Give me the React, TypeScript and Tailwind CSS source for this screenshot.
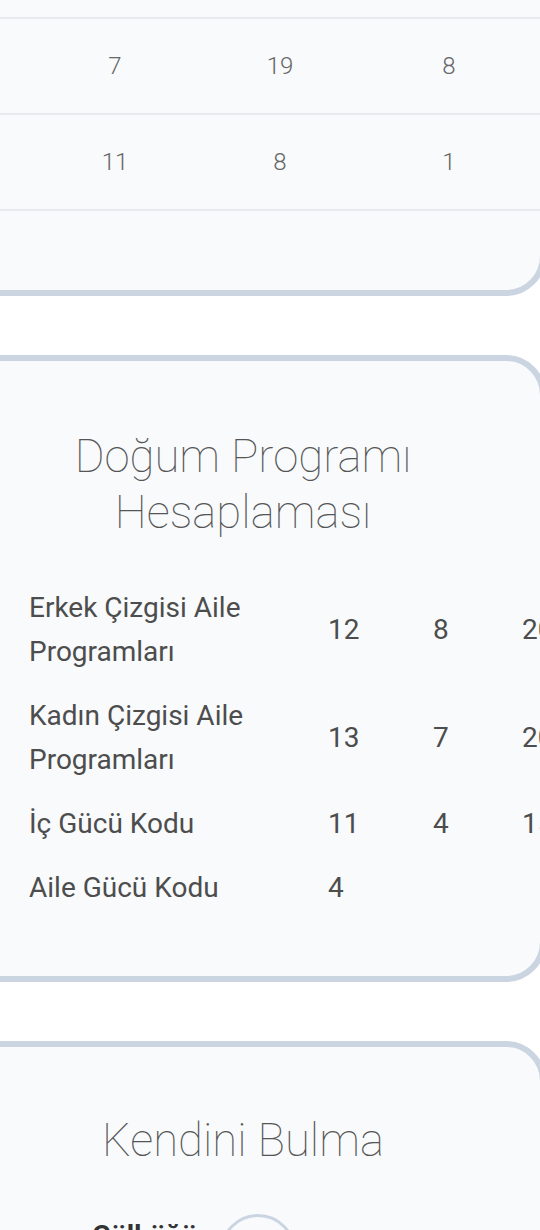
const topRows = [
  ["7", "19", "8"],
  ["11", "8", "1"],
];

const birthRows: { label: string; values: string[] }[] = [
  { label: "Erkek Çizgisi Aile Programları", values: ["12", "8", "20"] },
  { label: "Kadın Çizgisi Aile Programları", values: ["13", "7", "20"] },
  { label: "İç Gücü Kodu", values: ["11", "4", "15"] },
  { label: "Aile Gücü Kodu", values: ["4"] },
];

function Card({ className = "", children }: { className?: string; children: React.ReactNode }) {
  return (
    <div className={"rounded-[40px] border-[6px] border-[#cbd5e1] bg-[#f8fafc] " + className}>
      {children}
    </div>
  );
}

function Title({ children }: { children: React.ReactNode }) {
  return (
    <h2 className="px-[60px] text-center text-[45.5px] leading-[56px] font-thin text-[#555]">
      {children}
    </h2>
  );
}

export default function App() {
  return (
    <div className="h-[1230px] w-[540px] overflow-hidden bg-white font-['Roboto',sans-serif]">
      <div className="-ml-[60px] -mt-[78px] flex w-[606px] flex-col gap-[59px]">
        {/* previous table, scrolled up */}
        <Card className="pb-[79px]">
          <div className="h-[91px] border-b-2 border-[#e8eaed]" />
          {topRows.map((row, i) => (
            <div
              key={i}
              className="grid h-[96px] grid-cols-[88px_162px_168px_170px] items-center border-b-2 border-[#e8eaed] text-[24px] font-light text-[#666]"
            >
              <div />
              {row.map((v, j) => (
                <div key={j} className="text-center">
                  {v}
                </div>
              ))}
            </div>
          ))}
        </Card>

        <Card className="pt-[68px] pb-[56px]">
          <Title>Doğum Programı Hesaplaması</Title>
          <div className="mt-[35px] pl-[83px] text-[28px] leading-[44px] text-[#4d4d4d]">
            {birthRows.map((r) => (
              <div key={r.label} className="grid grid-cols-[299px_105px_89px_1fr] items-center py-[10px]">
                <div className="pr-[20px]">{r.label}</div>
                {r.values.map((v, j) => (
                  <div key={j} className="whitespace-nowrap">
                    {v}
                  </div>
                ))}
              </div>
            ))}
          </div>
        </Card>

        <Card className="pt-[66px] pb-[60px]">
          <Title>Kendini Bulma</Title>
          <div className="mt-[45px] flex items-start pl-[146px]">
            <div className="w-[128px] whitespace-nowrap text-[28px] leading-[44px] font-bold text-[#333]">
              Gülbüğü
            </div>
            <div className="h-[76px] w-[76px] rounded-full border-[3px] border-[#cbd5e1]" />
          </div>
        </Card>
      </div>
    </div>
  );
}
